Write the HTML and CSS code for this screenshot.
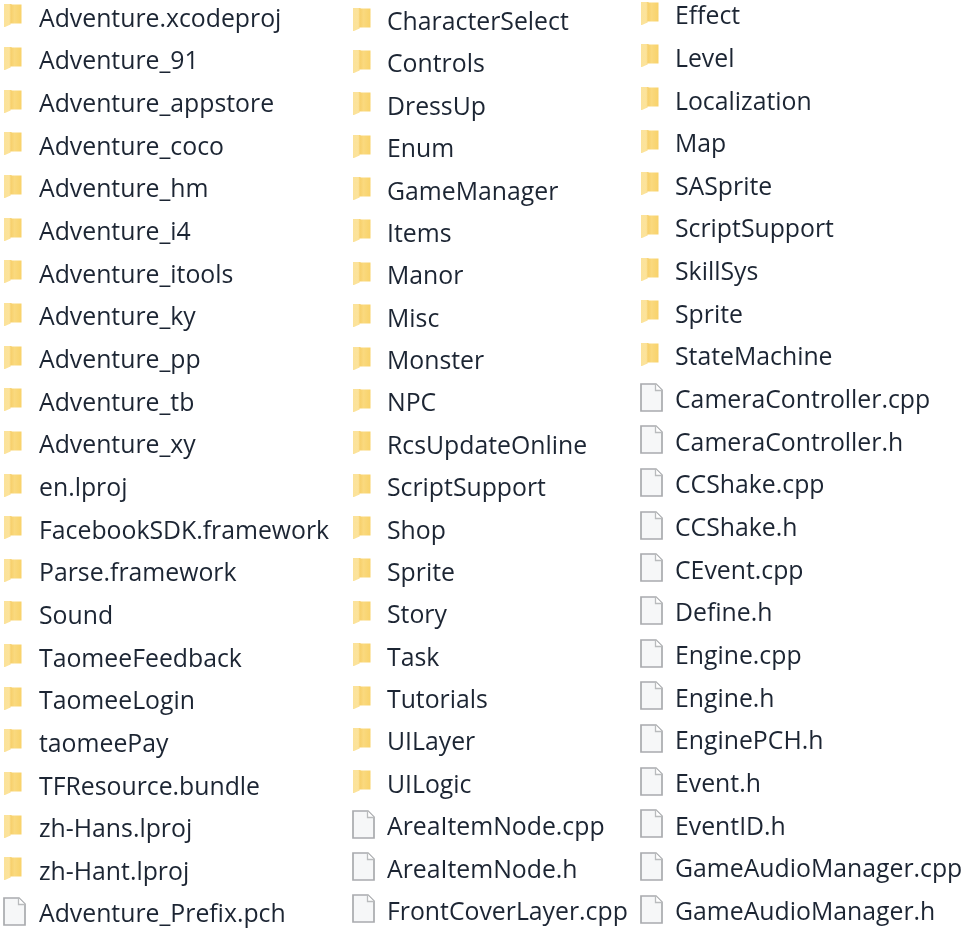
FILE: index.html
```html
<!DOCTYPE html>
<html lang="en">
<head>
<meta charset="utf-8">
<title>Files</title>
<link rel="stylesheet" href="styles.css">
</head>
<body>
<svg class="defs" width="0" height="0" aria-hidden="true">
  <defs>
    <linearGradient id="fg" x1="0" y1="0" x2="1" y2="0">
      <stop offset="0" stop-color="#fbe29a"/>
      <stop offset="0.3" stop-color="#fce39b"/>
      <stop offset="0.4" stop-color="#f7d06c"/>
      <stop offset="0.6" stop-color="#fad97e"/>
      <stop offset="1" stop-color="#f8d26a"/>
    </linearGradient>
    <symbol id="folder" viewBox="0 0 18 24">
      <path d="M0 1 H7 L8 1.5 H17.5 V20.5 H6.5 V21.5 L1 24 H0 Z" fill="url(#fg)"/>
    </symbol>
    <symbol id="file" viewBox="0 0 23 29">
      <path d="M1 1 H16 L22 7 V28 H1 Z" fill="#f6f7f8" stroke="#a9abae" stroke-width="1.7"/>
      <path d="M15.5 1 V7.5 H22" fill="#fff" stroke="#b9bbbd" stroke-width="1.3"/>
    </symbol>
  </defs>
</svg>
<main class="listing">
  <ul class="col col-a">
    <li><svg class="ico folder"><use href="#folder"/></svg>Adventure.xcodeproj</li>
    <li><svg class="ico folder"><use href="#folder"/></svg>Adventure_91</li>
    <li><svg class="ico folder"><use href="#folder"/></svg>Adventure_appstore</li>
    <li><svg class="ico folder"><use href="#folder"/></svg>Adventure_coco</li>
    <li><svg class="ico folder"><use href="#folder"/></svg>Adventure_hm</li>
    <li><svg class="ico folder"><use href="#folder"/></svg>Adventure_i4</li>
    <li><svg class="ico folder"><use href="#folder"/></svg>Adventure_itools</li>
    <li><svg class="ico folder"><use href="#folder"/></svg>Adventure_ky</li>
    <li><svg class="ico folder"><use href="#folder"/></svg>Adventure_pp</li>
    <li><svg class="ico folder"><use href="#folder"/></svg>Adventure_tb</li>
    <li><svg class="ico folder"><use href="#folder"/></svg>Adventure_xy</li>
    <li><svg class="ico folder"><use href="#folder"/></svg>en.lproj</li>
    <li><svg class="ico folder"><use href="#folder"/></svg>FacebookSDK.framework</li>
    <li><svg class="ico folder"><use href="#folder"/></svg>Parse.framework</li>
    <li><svg class="ico folder"><use href="#folder"/></svg>Sound</li>
    <li><svg class="ico folder"><use href="#folder"/></svg>TaomeeFeedback</li>
    <li><svg class="ico folder"><use href="#folder"/></svg>TaomeeLogin</li>
    <li><svg class="ico folder"><use href="#folder"/></svg>taomeePay</li>
    <li><svg class="ico folder"><use href="#folder"/></svg>TFResource.bundle</li>
    <li><svg class="ico folder"><use href="#folder"/></svg>zh-Hans.lproj</li>
    <li><svg class="ico folder"><use href="#folder"/></svg>zh-Hant.lproj</li>
    <li><svg class="ico file"><use href="#file"/></svg>Adventure_Prefix.pch</li>
  </ul>
  <ul class="col col-b">
    <li><svg class="ico folder"><use href="#folder"/></svg>CharacterSelect</li>
    <li><svg class="ico folder"><use href="#folder"/></svg>Controls</li>
    <li><svg class="ico folder"><use href="#folder"/></svg>DressUp</li>
    <li><svg class="ico folder"><use href="#folder"/></svg>Enum</li>
    <li><svg class="ico folder"><use href="#folder"/></svg>GameManager</li>
    <li><svg class="ico folder"><use href="#folder"/></svg>Items</li>
    <li><svg class="ico folder"><use href="#folder"/></svg>Manor</li>
    <li><svg class="ico folder"><use href="#folder"/></svg>Misc</li>
    <li><svg class="ico folder"><use href="#folder"/></svg>Monster</li>
    <li><svg class="ico folder"><use href="#folder"/></svg>NPC</li>
    <li><svg class="ico folder"><use href="#folder"/></svg>RcsUpdateOnline</li>
    <li><svg class="ico folder"><use href="#folder"/></svg>ScriptSupport</li>
    <li><svg class="ico folder"><use href="#folder"/></svg>Shop</li>
    <li><svg class="ico folder"><use href="#folder"/></svg>Sprite</li>
    <li><svg class="ico folder"><use href="#folder"/></svg>Story</li>
    <li><svg class="ico folder"><use href="#folder"/></svg>Task</li>
    <li><svg class="ico folder"><use href="#folder"/></svg>Tutorials</li>
    <li><svg class="ico folder"><use href="#folder"/></svg>UILayer</li>
    <li><svg class="ico folder"><use href="#folder"/></svg>UILogic</li>
    <li><svg class="ico file"><use href="#file"/></svg>AreaItemNode.cpp</li>
    <li><svg class="ico file"><use href="#file"/></svg>AreaItemNode.h</li>
    <li><svg class="ico file"><use href="#file"/></svg>FrontCoverLayer.cpp</li>
  </ul>
  <ul class="col col-c">
    <li><svg class="ico folder"><use href="#folder"/></svg>Effect</li>
    <li><svg class="ico folder"><use href="#folder"/></svg>Level</li>
    <li><svg class="ico folder"><use href="#folder"/></svg>Localization</li>
    <li><svg class="ico folder"><use href="#folder"/></svg>Map</li>
    <li><svg class="ico folder"><use href="#folder"/></svg>SASprite</li>
    <li><svg class="ico folder"><use href="#folder"/></svg>ScriptSupport</li>
    <li><svg class="ico folder"><use href="#folder"/></svg>SkillSys</li>
    <li><svg class="ico folder"><use href="#folder"/></svg>Sprite</li>
    <li><svg class="ico folder"><use href="#folder"/></svg>StateMachine</li>
    <li><svg class="ico file"><use href="#file"/></svg>CameraController.cpp</li>
    <li><svg class="ico file"><use href="#file"/></svg>CameraController.h</li>
    <li><svg class="ico file"><use href="#file"/></svg>CCShake.cpp</li>
    <li><svg class="ico file"><use href="#file"/></svg>CCShake.h</li>
    <li><svg class="ico file"><use href="#file"/></svg>CEvent.cpp</li>
    <li><svg class="ico file"><use href="#file"/></svg>Define.h</li>
    <li><svg class="ico file"><use href="#file"/></svg>Engine.cpp</li>
    <li><svg class="ico file"><use href="#file"/></svg>Engine.h</li>
    <li><svg class="ico file"><use href="#file"/></svg>EnginePCH.h</li>
    <li><svg class="ico file"><use href="#file"/></svg>Event.h</li>
    <li><svg class="ico file"><use href="#file"/></svg>EventID.h</li>
    <li><svg class="ico file"><use href="#file"/></svg>GameAudioManager.cpp</li>
    <li><svg class="ico file"><use href="#file"/></svg>GameAudioManager.h</li>
  </ul>
</main>
</body>
</html>
```
FILE: styles.css
```css
html, body {
  margin: 0;
  padding: 0;
  background: #fff;
}
body {
  width: 968px;
  height: 935px;
  overflow: hidden;
}
.defs {
  display: block;
  height: 0;
}
.listing {
  display: grid;
  grid-template-columns: 349px 288px 328px;
  padding-left: 3px;
  font-family: "Open Sans", "Noto Sans", sans-serif;
  font-size: 24.8px;
  line-height: 1.1;
  color: #1c2533;
  filter: blur(0.65px);
}
.col {
  list-style: none;
  margin: 0;
  padding: 0;
  --slot: 36px;
}
.col li {
  display: flex;
  align-items: flex-start;
  box-sizing: border-box;
  height: var(--row);
  padding-top: var(--pad);
  white-space: nowrap;
}
.col-a { --row: 42.67px; --pad: 3.7px; }
.col-b { --row: 42.38px; --pad: 7px; --slot: 35px; }
.col-c { --row: 42.67px; --pad: 1.2px; --slot: 35px; }
.ico {
  flex: none;
}
.folder {
  width: 18px;
  height: 24px;
  margin-left: 1px;
  margin-right: calc(var(--slot) - 19px);
  margin-top: -0.4px;
}
.file {
  width: 23px;
  height: 29px;
  margin-right: calc(var(--slot) - 23px);
  margin-top: -2.4px;
}
```
